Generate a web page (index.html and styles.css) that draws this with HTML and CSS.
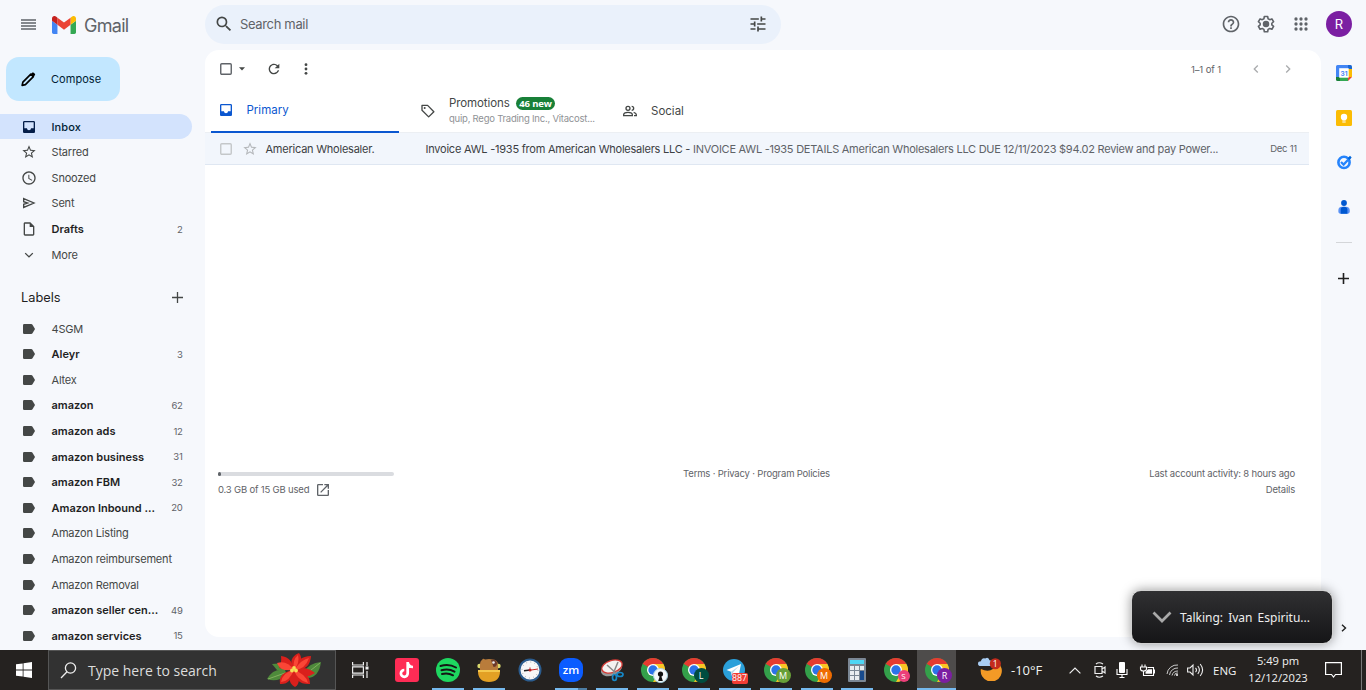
FILE: index.html
```
<!DOCTYPE html>
<html lang="en">
<head>
<meta charset="utf-8">
<title>Inbox - Gmail</title>
<link rel="stylesheet" href="styles.css">
</head>
<body>
<svg class="defs" aria-hidden="true">
  <symbol id="label" viewBox="0 0 12 10"><path d="M1.2 0H8.2Q9 0 9.500.7L12 5 9.500 9.300Q9 10 8.200 10H1.200Q0 10 0 8.800V1.200Q0 0 1.200 0Z"/></symbol>
  <symbol id="inbox" viewBox="0 0 24 24"><path d="M19 3H5c-1.100 0-2 .9-2 2v14c0 1.100.9 2 2 2h14c1.100 0 2-.9 2-2V5c0-1.100-.9-2-2-2zm0 11h-4c0 1.660-1.350 3-3 3s-3-1.340-3-3H5V5h14v9z"/></symbol>
  <symbol id="star" viewBox="0 0 24 24"><path d="M22 9.240l-7.190-.62L12 2 9.190 8.630 2 9.240l5.460 4.730L5.820 21 12 17.270 18.180 21l-1.630-7.030L22 9.240zM12 15.400l-3.760 2.270 1-4.280-3.320-2.880 4.380-.38L12 6.100l1.710 4.040 4.380.38-3.320 2.880 1 4.280L12 15.400z"/></symbol>
  <symbol id="box" viewBox="0 0 12 12"><rect x=".75" y=".75" width="10.500" height="10.500" rx="1" fill="none" stroke="currentColor" stroke-width="1.400"/></symbol>
  <symbol id="chrome" viewBox="0 0 24 24">
    <circle cx="12" cy="12" r="12" fill="#34a04a"/>
    <path d="M12 12 1.600 6A12 12 0 0 1 22.400 6Z" fill="#e53b30"/>
    <path d="M12 6H22.400A12 12 0 0 1 12 24L17.200 15Z" fill="#fbc524"/>
    <path d="M1.600 6 6.800 15 12 12Z" fill="#34a04a"/>
    <circle cx="12" cy="12" r="6" fill="#fff"/><circle cx="12" cy="12" r="4.700" fill="#2c73e8"/>
  </symbol>
</svg>

<div class="app">
  <header class="topbar">
    <div class="brand">
      <svg class="menu" viewBox="0 0 15 11"><path d="M0 1H15M0 4H15M0 7H15M0 10H15" stroke="#5f6368" stroke-width="1.300"/></svg>
      <svg class="gmail" viewBox="52 42 88 66"><path fill="#4285f4" d="M58 108h14V74L52 59v43c0 3.320 2.690 6 6 6"/><path fill="#34a853" d="M120 108h14c3.320 0 6-2.690 6-6V59l-20 15"/><path fill="#fbbc04" d="M120 48v26l20-15v-8c0-7.420-8.470-11.650-14.400-7.200"/><path fill="#ea4335" d="M72 74V48l24 18 24-18v26L96 92"/><path fill="#c5221f" d="M52 51v8l20 15V48l-5.600-4.200c-5.940-4.450-14.400-.22-14.400 7.200"/></svg>
      <span class="wordmark">Gmail</span>
    </div>
    <div class="search">
      <svg class="i20" viewBox="0 0 24 24"><path d="M15.500 14h-.79l-.28-.27A6.470 6.470 0 0 0 16 9.500 6.500 6.500 0 1 0 9.500 16c1.610 0 3.090-.59 4.230-1.570l.27.28v.79l5 4.990L20.490 19l-4.990-5zm-6 0C7.010 14 5 11.990 5 9.500S7.010 5 9.500 5 14 7.010 14 9.500 11.990 14 9.500 14z"/></svg>
      <span class="search-text">Search mail</span>
      <svg class="i20" viewBox="0 0 24 24"><path d="M3 17v2h6v-2H3zM3 5v2h10V5H3zm10 16v-2h8v-2h-8v-2h-2v6h2zM7 9v2H3v2h4v2h2V9H7zm14 4v-2H11v2h10zm-6-4h2V7h4V5h-4V3h-2v6z"/></svg>
    </div>
    <div class="tools">
      <svg class="i20" viewBox="0 0 24 24"><path d="M11 18h2v-2h-2v2zm1-16C6.480 2 2 6.480 2 12s4.480 10 10 10 10-4.480 10-10S17.520 2 12 2zm0 18c-4.410 0-8-3.590-8-8s3.590-8 8-8 8 3.590 8 8-3.590 8-8 8zm0-14c-2.210 0-4 1.790-4 4h2c0-1.100.9-2 2-2s2 .9 2 2c0 2-3 1.750-3 5h2c0-2.250 3-2.500 3-5 0-2.210-1.790-4-4-4z"/></svg>
      <svg class="i20" viewBox="0 0 24 24"><path fill="none" stroke="#5f6368" stroke-width="1.900" stroke-linejoin="round" d="M10 3h4l.5 2.700 2 1.100 2.600-.9 2 3.400-2.100 1.800v2l2.100 1.800-2 3.400-2.600-.9-2 1.100L14 21.300h-4l-.5-2.800-2-1.100-2.600.9-2-3.400L5 13.100v-2L2.900 9.300l2-3.400 2.600.9 2-1.100z"/><circle cx="12" cy="12.100" r="3.900"/></svg>
      <svg class="i20" viewBox="0 0 24 24"><g><circle cx="6" cy="6" r="2"/><circle cx="12" cy="6" r="2"/><circle cx="18" cy="6" r="2"/><circle cx="6" cy="12" r="2"/><circle cx="12" cy="12" r="2"/><circle cx="18" cy="12" r="2"/><circle cx="6" cy="18" r="2"/><circle cx="12" cy="18" r="2"/><circle cx="18" cy="18" r="2"/></g></svg>
      <span class="avatar">R</span>
    </div>
  </header>

  <nav class="sidebar">
    <div class="compose"><svg viewBox="0 0 16 16"><path d="M1.200 14.800 2 11.300 10.500 2.800 13.200 5.500 4.700 14Z" fill="none" stroke="#000" stroke-width="1.800" stroke-linejoin="round"/><path d="M10 3.200 12 1.200Q12.700.5 13.500 1.200L14.800 2.500Q15.500 3.300 14.800 4L12.800 6Z"/></svg><span>Compose</span></div>
    <ul class="rows">
      <li class="selected"><svg class="i16"><use href="#inbox"/></svg><span>Inbox</span></li>
      <li><svg class="i16"><use href="#star"/></svg><span>Starred</span></li>
      <li><svg class="i16" viewBox="0 0 24 24"><path d="M11.990 2C6.470 2 2 6.480 2 12s4.470 10 9.990 10C17.520 22 22 17.520 22 12S17.520 2 11.990 2zM12 20c-4.420 0-8-3.580-8-8s3.580-8 8-8 8 3.580 8 8-3.580 8-8 8zm.5-13H11v6l5.250 3.150.75-1.230-4.500-2.670z"/></svg><span>Snoozed</span></li>
      <li><svg class="i16" viewBox="0 0 24 24"><path fill="none" stroke="#444746" stroke-width="2" d="M4 5.300 19.500 12 4 18.700V14L10 12 4 10Z"/></svg><span>Sent</span></li>
      <li class="unread"><svg class="i16" viewBox="0 0 24 24"><path d="M14 2H6c-1.100 0-2 .9-2 2v16c0 1.100.9 2 2 2h12c1.100 0 2-.9 2-2V8l-6-6zM6 20V4h7v5h5v11H6z"/></svg><span>Drafts</span><b>2</b></li>
      <li><svg class="i16" viewBox="0 0 24 24"><path d="M17 8.500 12 13.500 7 8.500 5.600 9.900 12 16.300 18.400 9.900Z"/></svg><span>More</span></li>
    </ul>
    <div class="labels-head"><span>Labels</span><svg viewBox="0 0 11 11"><path d="M5.500 0V11M0 5.500H11" stroke="#444746" stroke-width="1.300"/></svg></div>
    <ul class="rows labels">
      <li><svg><use href="#label"/></svg><span>4SGM</span></li>
      <li class="unread"><svg><use href="#label"/></svg><span>Aleyr</span><b>3</b></li>
      <li><svg><use href="#label"/></svg><span>Altex</span></li>
      <li class="unread"><svg><use href="#label"/></svg><span>amazon</span><b>62</b></li>
      <li class="unread"><svg><use href="#label"/></svg><span>amazon ads</span><b>12</b></li>
      <li class="unread"><svg><use href="#label"/></svg><span>amazon business</span><b>31</b></li>
      <li class="unread"><svg><use href="#label"/></svg><span>amazon FBM</span><b>32</b></li>
      <li class="unread"><svg><use href="#label"/></svg><span>Amazon Inbound ...</span><b>20</b></li>
      <li><svg><use href="#label"/></svg><span>Amazon Listing</span></li>
      <li><svg><use href="#label"/></svg><span>Amazon reimbursement</span></li>
      <li><svg><use href="#label"/></svg><span>Amazon Removal</span></li>
      <li class="unread"><svg><use href="#label"/></svg><span>amazon seller cen...</span><b>49</b></li>
      <li class="unread"><svg><use href="#label"/></svg><span>amazon services</span><b>15</b></li>
    </ul>
  </nav>

  <main class="panel">
    <div class="toolbar">
      <svg class="box"><use href="#box"/></svg>
      <svg class="caret" viewBox="0 0 6 4"><path d="M0 .3H6L3 3.500Z"/></svg>
      <svg class="i16 reload" viewBox="0 0 24 24"><path d="M17.650 6.350A7.950 7.950 0 0 0 12 4c-4.420 0-7.990 3.580-7.990 8s3.570 8 7.990 8c3.730 0 6.840-2.550 7.730-6h-2.080A5.990 5.990 0 0 1 12 18c-3.310 0-6-2.690-6-6s2.690-6 6-6c1.660 0 3.140.69 4.220 1.780L13 11h7V4l-2.350 2.350z"/></svg>
      <svg class="i16 dots" viewBox="0 0 24 24"><circle cx="12" cy="5.500" r="2.100"/><circle cx="12" cy="12" r="2.100"/><circle cx="12" cy="18.500" r="2.100"/></svg>
      <span class="count">1–1 of 1</span>
      <svg class="i16 chev" viewBox="0 0 24 24"><path d="M15.400 7.400 14 6 8 12 14 18 15.400 16.600 10.800 12Z"/></svg>
      <svg class="i16 chev" viewBox="0 0 24 24"><path d="M8.600 7.400 10 6 16 12 10 18 8.600 16.600 13.200 12Z"/></svg>
    </div>
    <div class="tabs">
      <div class="tab active"><svg class="i16"><use href="#inbox"/></svg><span>Primary</span></div>
      <div class="tab promo"><svg class="i16" viewBox="0 0 24 24"><path d="M3 3.600H11.400L20.800 13 13 20.800 3 10.900Z" fill="none" stroke="#444746" stroke-width="2" stroke-linejoin="round"/><circle cx="7" cy="7.500" r="1.500"/></svg>
        <div><div class="promo-top"><span>Promotions</span><em>46 new</em></div><div class="promo-sub">quip, Rego Trading Inc., Vitacost...</div></div></div>
      <div class="tab social"><svg class="i16" viewBox="0 0 24 24"><g fill="none" stroke="#444746" stroke-width="2"><circle cx="9" cy="8" r="3"/><path d="M2.500 19V17.500C2.500 15 6.500 14 9 14S15.500 15 15.500 17.500V19Z"/><path d="M14.500 5A3 3 0 0 1 14.500 11M17.500 14.200C20 15 21.500 16 21.500 17.500V19H18"/></g></svg><span>Social</span></div>
    </div>
    <div class="mail">
      <svg class="box"><use href="#box"/></svg>
      <svg class="i16 mstar"><use href="#star"/></svg>
      <span class="sender">American Wholesaler.</span>
      <span class="subject">Invoice AWL -1935 from American Wholesalers LLC - <i>INVOICE AWL -1935 DETAILS American Wholesalers LLC DUE 12/11/2023 $94.02 Review and pay Power...</i></span>
      <span class="date">Dec 11</span>
    </div>
    <footer class="foot">
      <div class="quota"><div class="bar"><div class="fill"></div></div><div class="used"><span>0.3 GB of 15 GB used</span><svg viewBox="3 3 18 18"><path d="M19 19H5V5h7V3H5a2 2 0 0 0-2 2v14a2 2 0 0 0 2 2h14c1.100 0 2-.9 2-2v-7h-2v7zM14 3v2h3.590l-9.830 9.830 1.410 1.410L19 6.410V10h2V3h-7z"/></svg></div></div>
      <div class="terms">Terms · Privacy · Program Policies</div>
      <div class="activity"><span>Last account activity: 8 hours ago</span><span>Details</span></div>
    </footer>
  </main>

  <aside class="rail">
    <svg class="app-icon" viewBox="0 0 16 16"><path d="M1.500 0H12V4H4V12H0V1.500Q0 0 1.500 0Z" fill="#4285f4"/><path d="M12 0H14.500Q16 0 16 1.500V4H12Z" fill="#1967d2"/><path d="M12 4H16V12H12Z" fill="#fbbc04"/><path d="M4 12H12V16H4Z" fill="#34a853"/><path d="M0 12H4V16H1.500Q0 16 0 14.500Z" fill="#188038"/><path d="M12 12H16L12 16Z" fill="#ea4335"/><path d="M3.200 3.200H12.700V12.700H3.200Z" fill="#fff"/><text x="8" y="10.700" text-anchor="middle" class="cal">31</text></svg>
    <svg class="app-icon" viewBox="0 0 16 16"><rect width="16" height="16" rx="1.500" fill="#fbbc04"/><circle cx="8" cy="7" r="3.200" fill="#fff"/><path d="M6.300 8.500H9.700V10.600H6.300ZM6.300 11.400H9.700V12.600H6.300Z" fill="#fff"/></svg>
    <svg class="app-icon" viewBox="0 0 16 16"><circle cx="8" cy="8.400" r="5.600" fill="none" stroke="#2684fc" stroke-width="2.600"/><path d="M5 8 7.600 10.500 14 3.800" fill="none" stroke="#2684fc" stroke-width="2.300"/><path d="M11.600 4.200 14 1.800 15.700 3.500 13.300 5.900Z" fill="#0066da"/></svg>
    <svg class="app-icon" viewBox="0 0 16 16"><circle cx="8" cy="4" r="2.900" fill="#0058d0"/><path d="M2.300 12Q2.300 7.800 6 7.800H10Q13.800 7.800 13.800 12 13.800 14.700 11.500 14.700H4.600Q2.300 14.700 2.300 12Z" fill="#5a92f5"/><path d="M4.700 14.700V10.500Q4.700 7.800 8 7.800T11.400 10.500V14.700Z" fill="#0058d0"/></svg>
    <hr>
    <svg class="plus" viewBox="0 0 11 11"><path d="M5.500 0V11M0 5.500H11" stroke="#1f1f1f" stroke-width="1.600"/></svg>
    <svg class="collapse" viewBox="0 0 6 8"><path d="M1 .8 4.500 4 1 7.200" fill="none" stroke="#1f1f1f" stroke-width="1.400"/></svg>
  </aside>

  <div class="talking"><svg viewBox="0 0 20 12"><path d="M1.500 1.500 10 10 18.500 1.500" fill="none" stroke="#a9a9a9" stroke-width="2.700"/></svg><span>Talking: Ivan Espiritu...</span></div>

  <footer class="taskbar">
    <div class="start"><svg viewBox="0 0 16 16"><path d="M0 2.300 6.700 1.400V7.600H0ZM7.500 1.200 16 0V7.600H7.500ZM0 8.400H6.700V14.600L0 13.700ZM7.500 8.400H16V16L7.500 14.800Z" fill="#fff"/></svg></div>
    <div class="winsearch">
      <svg class="lens" viewBox="0 0 17 17"><circle cx="10.500" cy="6" r="5.100" fill="none" stroke="#eee" stroke-width="1.300"/><path d="M7 9.800 1 16" stroke="#eee" stroke-width="1.300"/></svg>
      <span>Type here to search</span>
      <svg class="flower" viewBox="0 0 54 34"><g fill="#4e8a3b"><path d="M0 26Q6 15 18 17L20 22Q10 30 0 26Z"/><path d="M54 9Q52 24 41 25L37 19Q42 10 54 9Z"/><path d="M5 11 18 10 20 17 10 17Z"/></g><path d="M1 26 18 20M53 10 39 21" stroke="#91b868" stroke-width=".8"/><g fill="#d9201c"><path d="M27 17 12 15Q15 10 14 3 25 4 27 17Z"/><path d="M27 17Q20 5 32 0 38 8 27 17Z"/><path d="M27 17Q30 3 44 3 43 18 27 17Z"/><path d="M27 17Q38 12 48 20 37 28 27 17Z"/><path d="M27 17Q43 19 43 31 28 32 27 17Z"/><path d="M27 17Q36 29 28 34 18 28 27 17Z"/><path d="M27 17Q24 32 13 31 11 19 27 17Z"/></g><g fill="#fa4636"><path d="M27 17Q13 19 10 10 20 7 27 17Z"/><path d="M27 17Q25 7 31 2 33 10 27 17Z"/><path d="M27 17Q35 6 42 5 38 17 27 17Z"/><path d="M27 17Q39 21 41 30 30 27 27 17Z"/><path d="M27 17Q22 29 14 29 16 19 27 17Z"/></g><g fill="#f5df56"><circle cx="27" cy="15" r="1.900"/><circle cx="25" cy="17.500" r="1.900"/><circle cx="29" cy="17.500" r="1.900"/></g></svg>
    </div>
    <div class="taskview"><svg viewBox="0 0 17 16"><path d="M.6 0V3H11.400V0M.6 16V13H11.400V16M.6 4.800H11.400V11.200H.6ZM15 0V4M15 9V16" fill="none" stroke="#eee" stroke-width="1.200"/><path d="M13.500 4.500H16.500V7.500H13.500Z" fill="#eee"/></svg></div>
    <div class="cell"><svg class="i24" viewBox="0 0 24 24"><rect width="24" height="24" rx="3" fill="#fe2c55"/><path d="M12.700 4V15.300A3.400 3.400 0 1 1 9.300 12M12.700 4.500Q13.700 9 18 9" fill="none" stroke="#fff" stroke-width="2.700"/></svg></div>
    <div class="cell open"><svg class="i24" viewBox="0 0 24 24"><circle cx="12" cy="12" r="12" fill="#1ed760"/><path d="M4.500 8Q13 5.500 20 9.500M5.500 12.300Q12.500 10.300 18.500 13.600M6 16Q12 14.500 17 17.300" fill="none" stroke="#151515" stroke-width="2" stroke-linecap="round"/></svg></div>
    <div class="cell open"><svg class="i24" viewBox="0 0 24 24"><circle cx="2.500" cy="8" r="2.200" fill="#d9d86c"/><circle cx="21.500" cy="8" r="2.200" fill="#d9d86c"/><path d="M3 13V7Q3 3 5 2 6 0 8 1.500 12 .5 16 1.500 21 2 21 7V13Z" fill="#b97c3b"/><path d="M14 2Q19 0 20 5 20 9 16.500 9Z" fill="#6c392b"/><circle cx="16.500" cy="4.500" r="1.300" fill="#eee"/><path d="M1 13H23Q23 24 12 24T1 13Z" fill="#e3a024"/><path d="M1 13H23" stroke="#f5c84c" stroke-width="2"/></svg></div>
    <div class="cell"><svg class="i24" viewBox="0 0 24 24"><circle cx="12" cy="12" r="10.500" fill="#f7f7f7" stroke="#2b5c8e" stroke-width="2"/><circle cx="12" cy="12" r="8" fill="none" stroke="#aaa" stroke-dasharray="1 3.190"/><path d="M12 12V9" stroke="#c88"/><path d="M6 12.800 12 12" stroke="#222" stroke-width="1.500"/><path d="M12 12.200 20 11" stroke="#c22"/><circle cx="12" cy="12" r="1.500" fill="#b22"/></svg></div>
    <div class="cell open stacked"><svg class="i24" viewBox="0 0 24 24"><rect width="24" height="24" rx="9" fill="#0b5cff"/><text x="12" y="15.500" text-anchor="middle" class="zm">zm</text></svg></div>
    <div class="cell open"><svg class="i24" viewBox="0 0 24 24"><ellipse cx="11.500" cy="11" rx="11" ry="6.500" transform="rotate(-22 11.500 11)" fill="#999"/><ellipse cx="12" cy="8.500" rx="10.500" ry="6" transform="rotate(-18 12 8.500)" fill="#f4f2f1" stroke="#d63a35" stroke-width="1.300"/><path d="M7 7 17 16M18 4 13 16" stroke="#888" stroke-width="1.500"/><g fill="none" stroke="#1688c8" stroke-width="1.700"><ellipse cx="14.500" cy="19.500" rx="2" ry="3"/><ellipse cx="20" cy="16.500" rx="3" ry="2"/></g></svg></div>
    <div class="cell open"><svg class="i24"><use href="#chrome"/></svg><span class="who key"><svg viewBox="0 0 14 14"><circle cx="7" cy="5.500" r="2.800" fill="#111"/><path d="M7 5 9.500 13H4.500Z" fill="#111"/></svg></span></div>
    <div class="cell open"><svg class="i24"><use href="#chrome"/></svg><span class="who teal">L</span></div>
    <div class="cell open"><svg class="i24" viewBox="0 0 24 24"><circle cx="11" cy="12" r="11" fill="#2ba0da"/><path d="M3.500 12 18 6 15.500 18.500 11 15.500 9 18 8 13.800Z" fill="#fff"/><path d="M8 13.800 16 8 10 14.500 9 18" fill="#bcd9ea"/></svg><span class="alert">887</span></div>
    <div class="cell open"><svg class="i24"><use href="#chrome"/></svg><span class="who green">M</span></div>
    <div class="cell open"><svg class="i24"><use href="#chrome"/></svg><span class="who orange">M</span></div>
    <div class="cell calc open"><svg class="i24" viewBox="0 0 24 24"><rect x="3" width="18" height="24" rx="1" fill="#7b8794"/><path d="M5 2H19V6H5Z" fill="#4fd6f4"/><path d="M5 8H9V12H5ZM10 8H14V12H10ZM15 8H19V12H15ZM5 13H9V17H5ZM10 13H14V17H10ZM5 18H9V22H5ZM10 18H14V22H10Z" fill="#e9edf0"/><path d="M15 13H19V22H15Z" fill="#174a8c"/></svg></div>
    <div class="cell"><svg class="i24"><use href="#chrome"/></svg><span class="who pink">S</span></div>
    <div class="cell focus open"><svg class="i24"><use href="#chrome"/></svg><span class="who purple">R</span></div>
    <div class="tray">
      <svg class="w-weather" viewBox="0 0 26 24"><path d="M3 12Q15 18 20 5A11 11 0 1 1 3 12Z" fill="#f39a26"/><path d="M3 9Q0 9 0 6.500T3 4Q4 0 7.500 1 11-1 12 3 15 3 14.500 9Z" fill="#a9cdf3"/><circle cx="18" cy="6.500" r="5.800" fill="#c42b1c"/><text x="18" y="10" text-anchor="middle" class="one">1</text></svg>
      <span class="temp">-10°F</span>
      <svg class="w-up" viewBox="0 0 12 7"><path d="M.6 6.400 6 1 11.400 6.400" fill="none" stroke="#eee" stroke-width="1.200"/></svg>
      <svg class="w-cam" viewBox="0 0 12 16"><path d="M1 4.500H8V11.500H1ZM8 7 11 5V11L8 9M2 2Q5-.5 9 2M2 14Q5 16.500 9 14" fill="none" stroke="#eee" stroke-width="1.200"/></svg>
      <svg class="w-mic" viewBox="0 0 12 16"><rect x="3" width="6" height="11" rx="1" fill="#fff"/><path d="M1 7V12.500H11V7M6 13V15.500M3.500 15.500H8.500" fill="none" stroke="#fff" stroke-width="1.100"/></svg>
      <svg class="w-bat" viewBox="0 0 16 12"><path d="M3 .5V3M6 .5V3M1.500 3H7.500V5Q7.500 7 4.500 7T1.500 5ZM4.500 7V11.500H14.500V3.500H8.500M14.500 6H15.500V9.500" fill="none" stroke="#fff" stroke-width="1.100"/><path d="M6.500 8 9 5.200H13V9.800H6.500Z" fill="#fff"/></svg>
      <svg class="w-wifi" viewBox="0 0 13 12"><path d="M1 10A10 10 0 0 1 12 1M3.500 11A8 8 0 0 1 12 4M6 11.500A6 6 0 0 1 12 7M8.500 11.500A3 3 0 0 1 12 9" fill="none" stroke="#ccc" stroke-width="1"/><circle cx="11" cy="11" r="1" fill="#fff"/></svg>
      <svg class="w-vol" viewBox="0 0 17 14"><path d="M.6 5H3L6 2V12L3 9H.6ZM8.500 4.800Q10.500 7 8.500 9.200M10.800 3Q14 7 10.800 11M13.200 1Q18 7 13.200 13" fill="none" stroke="#eee" stroke-width="1.100"/></svg>
      <span class="lang">ENG</span>
      <div class="clock"><span>5:49 pm</span><span>12/12/2023</span></div>
      <svg class="w-note" viewBox="0 0 17 16"><path d="M.6.6H16.400V12.500H10.500L8.500 15 6.500 12.500H.6Z" fill="none" stroke="#fff" stroke-width="1.200"/></svg>
    </div>
  </footer>
</div>
</body>
</html>
```
FILE: styles.css
```
* { box-sizing: border-box; }
body { margin: 0; font-family: Inter, "Open Sans", sans-serif; color: #444746; background: #f6f8fc; }
svg { display: block; flex: none; fill: #444746; color: #444746; }
ul { list-style: none; margin: 0; padding: 0; }
.defs { display: none; }
.app { position: relative; width: 1366px; height: 690px; overflow: hidden; display: grid; grid-template: 50px 600px 40px / 205px 1116px 45px; white-space: nowrap; }
.i16 { width: 16px; height: 16px; }
.i20 { width: 20px; height: 20px; }
.i24 { width: 24px; height: 24px; }

.topbar { grid-column: 1 / -1; display: flex; align-items: center; padding-bottom: 1px; }
.brand { width: 205px; display: flex; align-items: center; padding-left: 21px; }
.menu { width: 15px; height: 11px; }
.gmail { width: 24px; height: 18px; margin-left: 16px; }
.wordmark { margin-left: 8px; padding-top: 1px; font-size: 18px; letter-spacing: -.7px; color: #5f6368; }
.search { width: 576px; height: 39px; border-radius: 20px; background: #eaf1fb; display: flex; align-items: center; padding: 0 13px 1px 9px; }
.search-text { flex: 1; margin-left: 6px; font-size: 13px; letter-spacing: -.35px; color: #5f6368; }
.tools { flex: 1; display: flex; justify-content: flex-end; align-items: center; gap: 15px; padding: 0 14px 1px 0; }
.tools svg { fill: #5f6368; }
.avatar { width: 26px; height: 26px; border-radius: 50%; background: #7b1fa2; color: #fff; font-size: 13px; line-height: 26px; text-align: center; }

.sidebar { padding-top: 7px; overflow: hidden; }
.compose { width: 114px; height: 44px; margin-left: 6px; border-radius: 13px; background: #c2e7ff; color: #001d35; display: flex; align-items: center; padding-left: 15px; font-size: 11px; }
.compose svg { width: 15px; height: 16px; margin-right: 15px; fill: #000; }
.compose span { padding-bottom: 1px; letter-spacing: .05px; }
.rows { margin-top: 12.900px; letter-spacing: -.18px; }
.rows li { height: 25.6px; width: 192px; display: flex; align-items: center; padding: 0 9.500px 0 21px; font-size: 11px; }
.rows li > svg { margin-right: 14.500px; }
.rows li > span { flex: 1; }
.rows b { font-size: 9.500px; font-weight: 400; letter-spacing: -.3px; color: #5f6368; }
.rows .selected { background: #d3e3fd; border-radius: 0 13px 13px 0; color: #001d35; font-weight: 500; letter-spacing: .1px; }
.selected svg { fill: #041e49; color: #041e49; }
.rows .unread { color: #1f1f1f; font-weight: 600; letter-spacing: 0; }
.labels-head { height: 48.400px; padding: 11px 22px 0 21px; display: flex; align-items: center; justify-content: space-between; font-size: 12.800px; color: #1f1f1f; }
.labels-head svg { width: 11px; height: 11px; }
.labels { margin-top: 0; }
.labels li { padding-left: 23px; }
.labels li > svg { width: 12px; height: 10px; margin-right: 16.500px; }

.panel { height: 587px; background: #fff; border-radius: 14px; display: flex; flex-direction: column; }
.toolbar { height: 38px; display: flex; align-items: center; padding: 0 25px 0 15px; }
.box { width: 12px; height: 12px; }
.toolbar .box { color: #5f6368; }
.caret { width: 6px; height: 4px; margin-left: 7px; }
.reload { width: 16px; height: 16px; margin-left: 21px; }
.dots { margin-left: 16px; }
.count { margin-left: auto; margin-right: 27px; font-size: 9.500px; letter-spacing: -.1px; color: #5f6368; }
.chev { fill: #a9abad; }
.chev + .chev { margin-left: 16px; }
.tabs { height: 44px; display: flex; }
.tab { display: flex; align-items: center; font-size: 11.500px; }
.active { width: 188px; height: 45px; margin-left: 6px; padding-left: 7px; border-bottom: 2px solid #0b57d0; color: #0b57d0; position: relative; }
.active svg { fill: #0b57d0; color: #0b57d0; margin-right: 12.500px; }
.promo { margin-left: 21px; width: 202px; padding-top: 2px; letter-spacing: -.1px; }
.promo > svg { margin-right: 13px; }
.promo-top { display: flex; align-items: center; gap: 6px; height: 15px; }
.promo-top em { font: 700 9.500px/13px "Open Sans", sans-serif; letter-spacing: -.1px; background: #188038; color: #fff; border-radius: 7px; padding: 0 3.500px; }
.promo-sub { font-size: 9.500px; line-height: 16px; letter-spacing: -.23px; color: #8f9295; }
.social > svg { margin-right: 13px; }
.social { padding-top: 1px; }
.mail { width: 1104px; height: 33px; padding: 0 12px 0 15px; display: flex; align-items: center; background: #f2f6fc; border-top: 1px solid #eceff3; border-bottom: 1px solid #dfe7f2; font-size: 11px; letter-spacing: -.23px; }
.mail .box, .mstar { color: #c4c7c9; fill: #b4b7ba; }
.mstar { margin-left: 10px; }
.sender { width: 160px; margin-left: 7.500px; color: #3c4043; }
.subject { color: #3c4043; }
.subject i { font-style: normal; letter-spacing: -.25px; color: #5f6368; }
.date { margin-left: auto; font-size: 9.500px; color: #5f6368; }
.foot { margin: 303px 26px 0 13px; display: grid; grid-template-columns: 176px 1fr 176px; font-size: 9.500px; line-height: 16px; letter-spacing: -.18px; color: #5f6368; }
.quota { padding-top: 4px; }
.bar { height: 4px; border-radius: 2px; background: #dadce0; }
.fill { width: 3px; height: 4px; border-radius: 2px; background: #5f6368; }
.used { display: flex; align-items: center; gap: 8px; height: 16px; margin-top: 5.500px; }
.used svg { width: 12px; height: 12px; fill: #5f6368; }
.terms { text-align: center; margin-top: -2px; }
.activity { display: flex; flex-direction: column; align-items: flex-end; margin-top: -2px; }

.rail { display: flex; flex-direction: column; align-items: center; padding-top: 15px; }
.app-icon { width: 16px; height: 16px; margin-bottom: 28.600px; }
.cal { font: 700 6.500px Inter, sans-serif; fill: #4285f4; }
.rail hr { width: 16px; margin: -1px 0 30px; border: 0; border-top: 1px solid #d4d6d9; }
.plus { width: 11px; height: 11px; }
.collapse { width: 6px; height: 8px; margin-top: 340px; }

.talking { position: absolute; left: 1131px; top: 590px; width: 202px; height: 54px; border: 1px solid #cfcfcf; border-radius: 10px; background: linear-gradient(#303032, #151517); box-shadow: 0 0 12px rgba(0,0,0,.4); color: #eee; font: 12px "Noto Sans", sans-serif; word-spacing: 2px; display: flex; align-items: center; padding-left: 20px; }
.talking svg { width: 20px; height: 12px; margin-right: 8px; }

.taskbar { grid-column: 1 / -1; background: #252220; color: #f2f2f2; display: flex; position: relative; font-family: "Open Sans", sans-serif; }
.start { width: 48px; display: grid; place-items: center; }
.start svg { width: 16px; height: 16px; }
.winsearch { width: 288px; background: #323232; border: 1px solid #555; display: flex; align-items: center; font-size: 14px; padding-left: 11px; color: #ddd; }
.lens { width: 17px; height: 17px; margin-right: 11px; }
.flower { width: 54px; height: 34px; margin-left: auto; margin-right: 14px; }
.taskview { width: 50.500px; padding-right: 2px; display: grid; place-items: center; }
.taskview svg { width: 17px; height: 16px; }
.cell { width: 41px; display: grid; place-items: center; position: relative; }
.open::after { content: ""; position: absolute; left: 4.500px; right: 4.500px; bottom: 0; height: 2px; background: #76b9ed; }
.stacked::after { background: linear-gradient(90deg, #76b9ed 72%, #4d7da3 72%); }
.calc { width: 38px; }
.calc::after { left: 3px; right: 3px; }
.focus { width: 39px; margin-left: .5px; background: #4e4c4b; }
.focus::after { left: 0; right: 0; }
.who { position: absolute; left: 20px; top: 18px; width: 15px; height: 15px; border-radius: 50%; font-size: 9px; line-height: 15px; text-align: center; color: #fff; }
.key { background: #f4f8fa; border: 1px solid #a8d5e4; }
.teal { background: #004d40; } .green { background: #689f38; } .orange { background: #ef6c00; } .purple { background: #7b1fa2; }
.pink { background: #ec407a; width: 12px; height: 12px; left: 22px; top: 20px; line-height: 12px; font-size: 8px; }
.alert { position: absolute; left: 17px; top: 23px; width: 16px; height: 11px; border-radius: 2px; background: #f23c34; font: 9px/11px Roboto, sans-serif; text-align: center; }
.zm { font: 600 11.500px "Open Sans", sans-serif; fill: #fff; }
.one { font: 9px "Open Sans", sans-serif; fill: #fff; }
.tray { flex: 1; display: flex; align-items: center; padding-left: 22px; border-right: 1px solid #777; margin-right: 4px; font-size: 13px; }
.w-weather { width: 25px; height: 24px; margin-bottom: 3px; }
.temp { width: 58px; margin-left: 8px; }
.w-up { width: 12px; height: 7px; }
.w-cam { width: 12px; height: 16px; margin-left: 13px; }
.w-mic { width: 12px; height: 16px; margin-left: 10px; }
.w-bat { width: 16px; height: 12px; margin-left: 11px; }
.w-wifi { width: 13px; height: 12px; margin-left: 11px; }
.w-vol { width: 17px; height: 14px; margin-left: 8px; }
.lang { margin-left: 9px; width: 24px; font-size: 11.500px; }
.clock { width: 60px; margin-left: 11px; padding-bottom: 2px; display: flex; flex-direction: column; align-items: center; font-size: 11.200px; line-height: 17.500px; }
.w-note { width: 17px; height: 16px; margin-left: 17px; }
```
